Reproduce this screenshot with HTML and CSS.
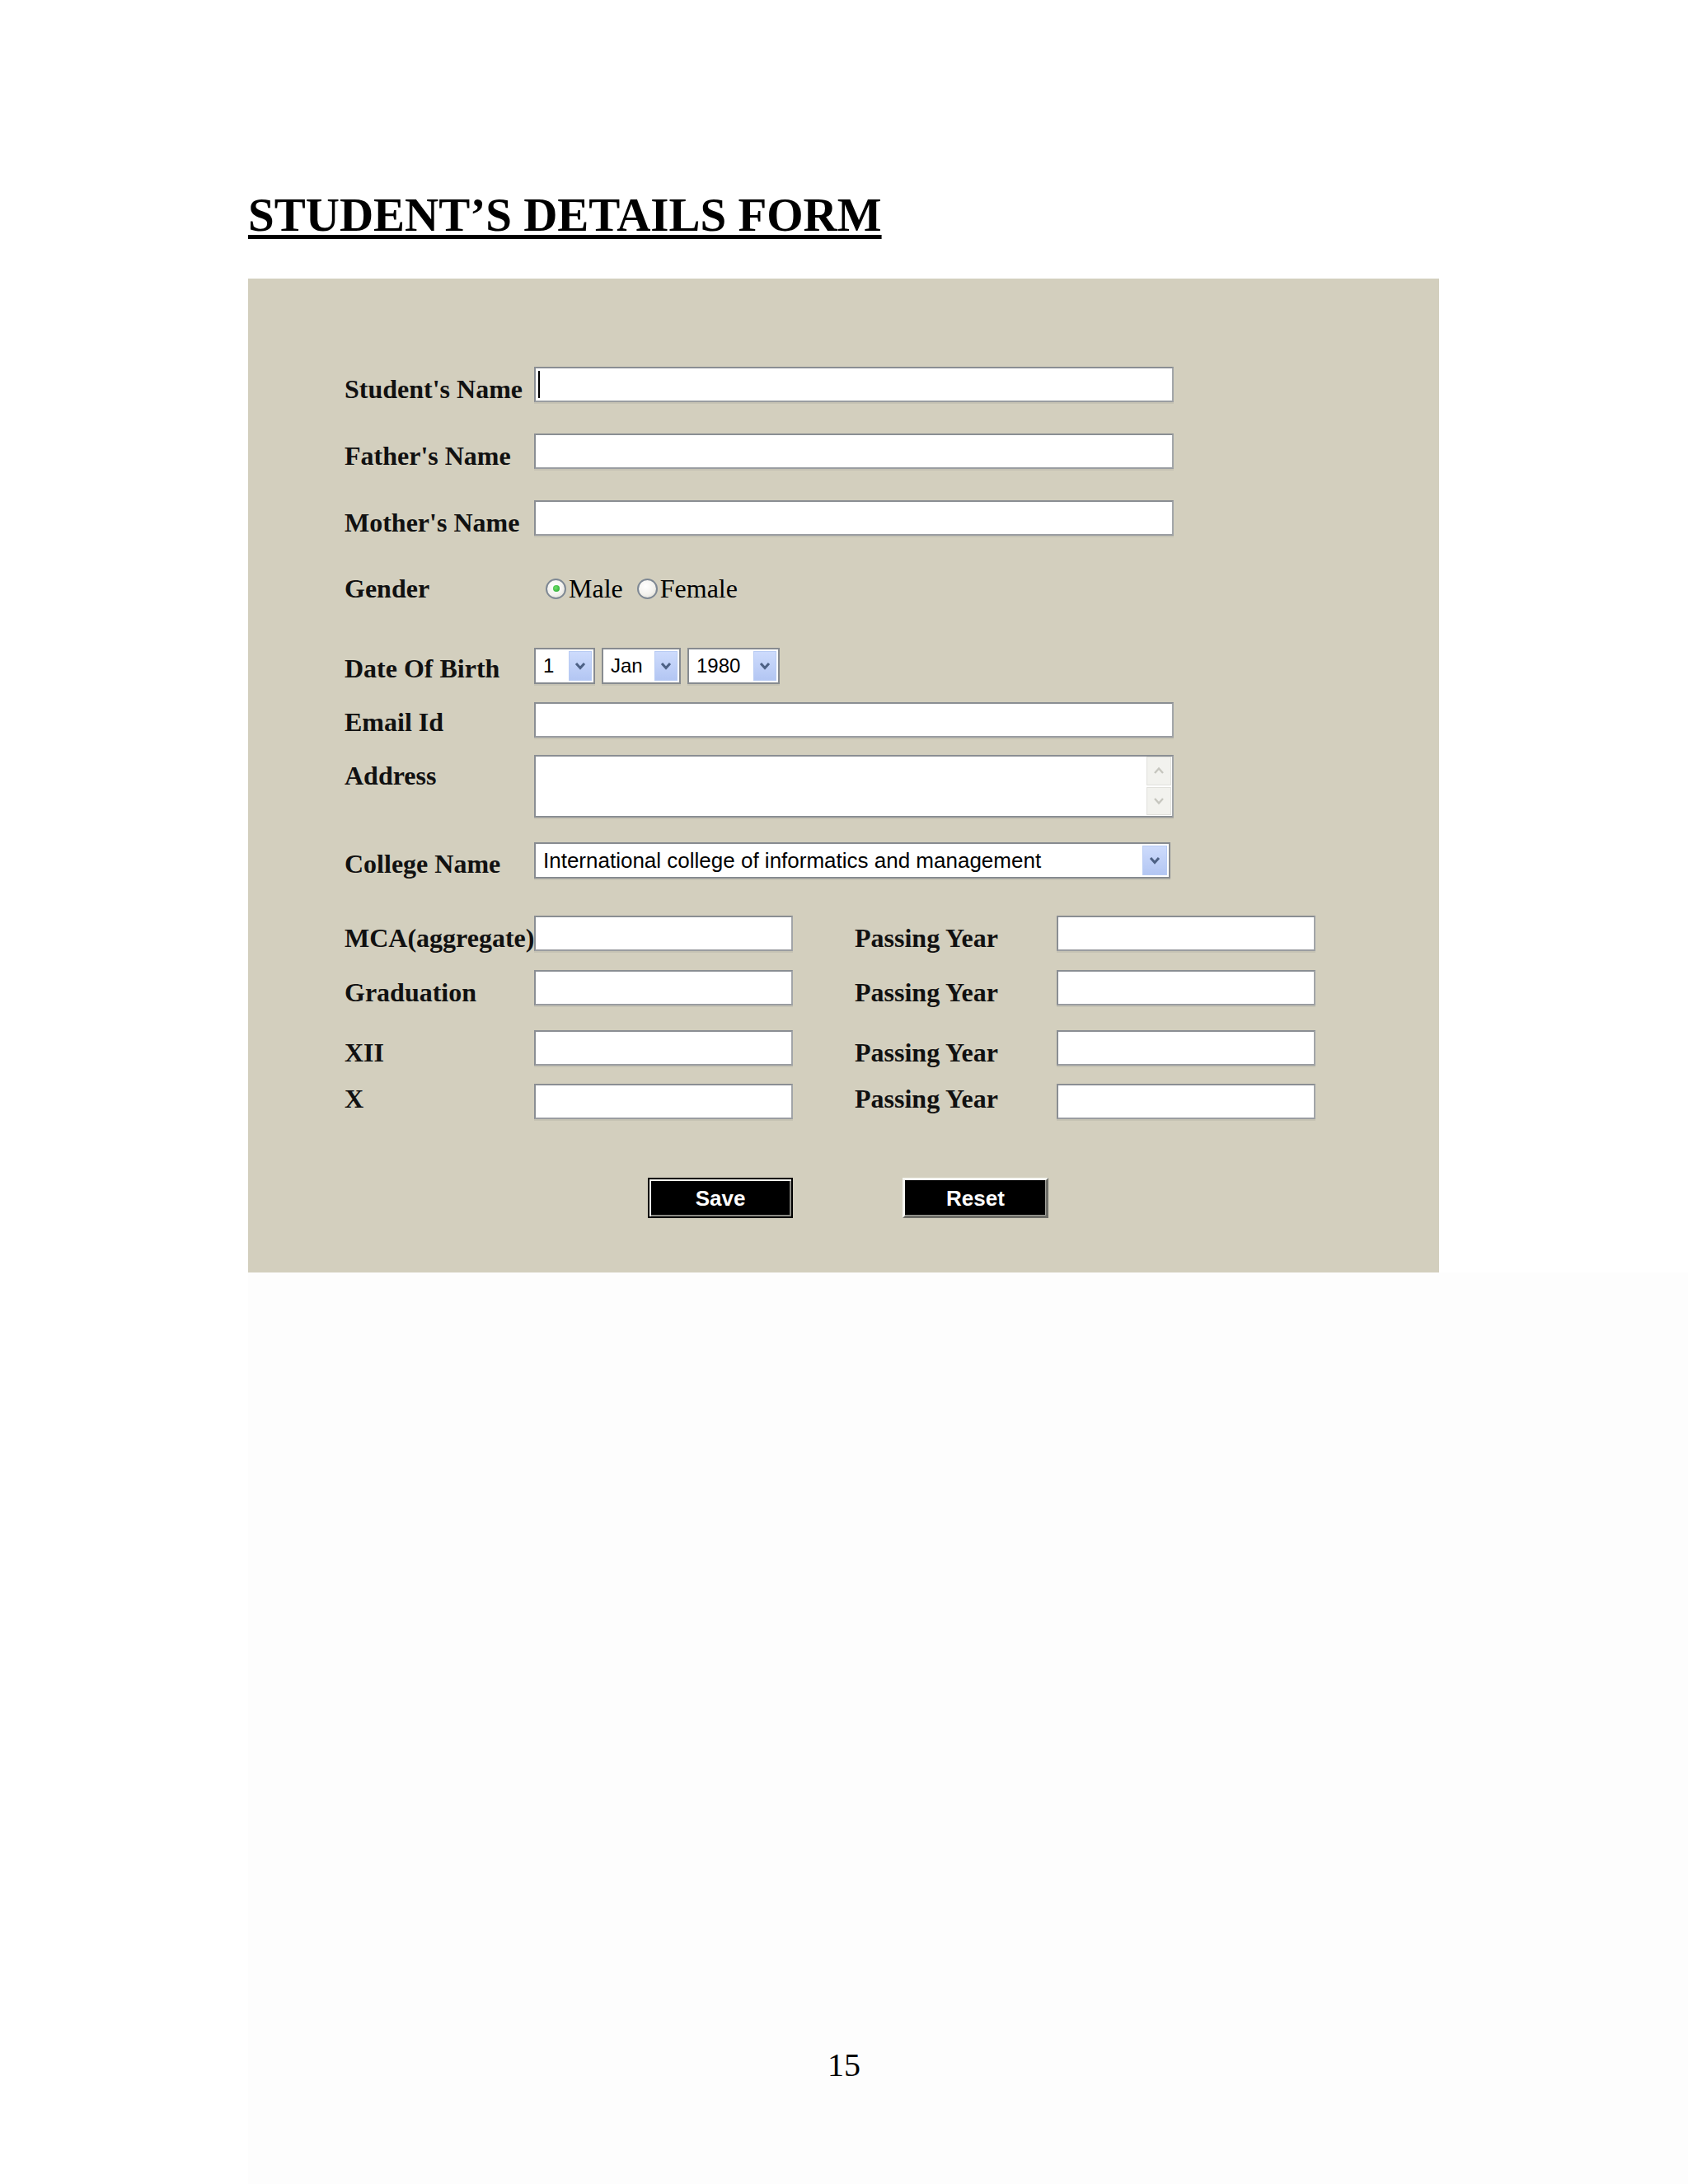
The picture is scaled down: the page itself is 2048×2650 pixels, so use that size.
FILE: index.html
```html
<!DOCTYPE html>
<html lang="en">
<head>
<meta charset="utf-8">
<title>Student's Details Form</title>
<link rel="stylesheet" href="styles.css">
</head>
<body>
<h1 class="title">STUDENT’S DETAILS FORM</h1>

<section class="panel">
  <div class="row">
    <span class="label">Student's Name</span>
    <div class="field field-wide"><span class="caret"></span></div>
  </div>
  <div class="row mt-38">
    <span class="label">Father's Name</span>
    <div class="field field-wide"></div>
  </div>
  <div class="row mt-38">
    <span class="label">Mother's Name</span>
    <div class="field field-wide"></div>
  </div>
  <div class="row mt-48">
    <span class="label">Gender</span>
    <div class="radios">
      <span class="radio checked"></span><span class="opt opt-male">Male</span>
      <span class="radio"></span><span class="opt">Female</span>
    </div>
  </div>
  <div class="row mt-56">
    <span class="label label-up3">Date Of Birth</span>
    <div class="selects">
      <div class="select sel-day"><span>1</span><span class="arrow"><svg width="14" height="10" viewBox="0 0 14 10"><path d="M2 2 L7 7.5 L12 2" fill="none" stroke="#4d6185" stroke-width="3"/></svg></span></div>
      <div class="select sel-month"><span>Jan</span><span class="arrow"><svg width="14" height="10" viewBox="0 0 14 10"><path d="M2 2 L7 7.5 L12 2" fill="none" stroke="#4d6185" stroke-width="3"/></svg></span></div>
      <div class="select sel-year"><span>1980</span><span class="arrow"><svg width="14" height="10" viewBox="0 0 14 10"><path d="M2 2 L7 7.5 L12 2" fill="none" stroke="#4d6185" stroke-width="3"/></svg></span></div>
    </div>
  </div>
  <div class="row mt-22">
    <span class="label label-up3">Email Id</span>
    <div class="field field-wide"></div>
  </div>
  <div class="row row-top mt-21">
    <span class="label label-addr">Address</span>
    <div class="textarea">
      <div class="scroll">
        <span class="scroll-btn"><svg width="14" height="10" viewBox="0 0 14 10"><path d="M2 8 L7 2.5 L12 8" fill="none" stroke="#c6c6bf" stroke-width="2.4"/></svg></span>
        <span class="scroll-btn"><svg width="14" height="10" viewBox="0 0 14 10"><path d="M2 2 L7 7.5 L12 2" fill="none" stroke="#c6c6bf" stroke-width="2.4"/></svg></span>
      </div>
    </div>
  </div>
  <div class="row mt-30">
    <span class="label label-up2">College Name</span>
    <div class="select sel-college"><span>International college of informatics and management</span><span class="arrow"><svg width="14" height="10" viewBox="0 0 14 10"><path d="M2 2 L7 7.5 L12 2" fill="none" stroke="#4d6185" stroke-width="3"/></svg></span></div>
  </div>
  <div class="row mt-45">
    <span class="label">MCA(aggregate)</span>
    <div class="field field-short"></div>
    <span class="label label-year">Passing Year</span>
    <div class="field field-short"></div>
  </div>
  <div class="row mt-23">
    <span class="label">Graduation</span>
    <div class="field field-short"></div>
    <span class="label label-year">Passing Year</span>
    <div class="field field-short"></div>
  </div>
  <div class="row mt-30">
    <span class="label">XII</span>
    <div class="field field-short"></div>
    <span class="label label-year">Passing Year</span>
    <div class="field field-short"></div>
  </div>
  <div class="row mt-22">
    <span class="label label-up9">X</span>
    <div class="field field-short"></div>
    <span class="label label-year label-up9">Passing Year</span>
    <div class="field field-short"></div>
  </div>
  <div class="buttons">
    <button class="btn btn-save" type="button">Save</button>
    <button class="btn btn-reset" type="button">Reset</button>
  </div>
</section>

<div class="tail">
  <p class="pageno">15</p>
</div>
</body>
</html>
```
FILE: styles.css
```css
* { box-sizing: border-box; }

html, body {
  margin: 0;
  padding: 0;
  background: #ffffff;
}

body {
  width: 2048px;
  min-height: 2650px;
  font-family: "Liberation Serif", "Times New Roman", serif;
  color: #000;
}

.title {
  margin: 0;
  padding: 232px 0 0 301px;
  font-size: 57px;
  line-height: 57px;
  font-weight: bold;
  text-decoration: underline;
  text-decoration-thickness: 5px;
  text-underline-offset: 5px;
}

.panel {
  margin: 49px 0 0 301px;
  width: 1445px;
  height: 1206px;
  background: #d3cfbe;
  padding: 107px 0 0 117px;
  display: flex;
  flex-direction: column;
}

.row {
  display: flex;
  align-items: flex-end;
}
.row-top { align-items: flex-start; }

.mt-21 { margin-top: 21px; }
.mt-22 { margin-top: 22px; }
.mt-23 { margin-top: 23px; }
.mt-30 { margin-top: 30px; }
.mt-38 { margin-top: 38px; }
.mt-45 { margin-top: 45px; }
.mt-48 { margin-top: 48px; }
.mt-56 { margin-top: 56px; }

.label {
  width: 230px;
  flex-shrink: 0;
  font-size: 32px;
  line-height: 32px;
  font-weight: bold;
  white-space: nowrap;
  color: #111;
}
.label-year {
  width: 245px;
  margin-left: 75px;
}
.label-up2 { margin-bottom: 2px; }
.label-up3 { margin-bottom: 3px; }
.label-up9 { margin-bottom: 9px; }
.label-addr { margin-top: 9px; }

.field {
  position: relative;
  height: 43px;
  flex-shrink: 0;
  background: #fff;
  border: 2px solid #8a8e93;
  border-right-color: #a2a5a8;
  border-bottom-color: #9a9da1;
  box-shadow: 0 2px 0 #c6c3b4;
  display: flex;
  align-items: center;
}
.field-wide { width: 776px; }
.field-short { width: 314px; }

.caret {
  display: block;
  width: 2px;
  height: 33px;
  margin-left: 3px;
  background: #000;
}

/* Gender radios */
.radios {
  height: 32px;
  display: flex;
  align-items: center;
  padding-left: 14px;
}
.radio {
  width: 25px;
  height: 25px;
  flex-shrink: 0;
  border-radius: 50%;
  border: 2px solid #7e8894;
  background: radial-gradient(circle at 40% 35%, #ffffff 0, #f3f2ee 55%, #d8d6cc 100%);
  display: flex;
  align-items: center;
  justify-content: center;
}
.radio.checked::after {
  content: "";
  width: 8px;
  height: 8px;
  border-radius: 50%;
  background: radial-gradient(circle at 40% 40%, #6ee06a 0, #21a12a 100%);
}
.opt {
  font-size: 32px;
  line-height: 32px;
  margin-left: 3px;
  white-space: nowrap;
}
.opt-male { margin-right: 17px; }

/* Selects */
.selects {
  display: flex;
  gap: 8px;
}
.select {
  height: 44px;
  flex-shrink: 0;
  background: #fff;
  border: 2px solid #878b90;
  box-shadow: 0 2px 0 #c6c3b4;
  display: flex;
  align-items: center;
  justify-content: space-between;
  padding: 0 2px 0 9px;
  font-family: "Liberation Sans", Arial, sans-serif;
  font-size: 24px;
  color: #000;
  white-space: nowrap;
}
.sel-day { width: 74px; }
.sel-month { width: 96px; }
.sel-year { width: 112px; }
.sel-college {
  width: 772px;
  font-size: 26px;
}
.arrow {
  width: 28px;
  height: 36px;
  flex-shrink: 0;
  background: linear-gradient(#cddbfc, #b3c6f3);
  border: 1px solid #b8cbf3;
  display: flex;
  align-items: center;
  justify-content: center;
}
.sel-college .arrow { width: 30px; }

/* Address textarea */
.textarea {
  width: 776px;
  height: 76px;
  flex-shrink: 0;
  background: #fff;
  border: 2px solid #8a8e93;
  border-right-color: #a2a5a8;
  box-shadow: 0 2px 0 #c6c3b4;
  display: flex;
  justify-content: flex-end;
  padding: 0 1px 1px 0;
}
.scroll {
  width: 30px;
  display: flex;
  flex-direction: column;
  gap: 2px;
}
.scroll-btn {
  flex: 1;
  background: #f2f2ee;
  border: 1px solid #e1e1dc;
  display: flex;
  align-items: center;
  justify-content: center;
}

/* Buttons */
.buttons {
  margin-top: 71px;
  padding-left: 368px;
  display: flex;
  gap: 133px;
}
.btn {
  width: 176px;
  height: 49px;
  margin: 0;
  padding: 0;
  background: #000;
  color: #fff;
  font-family: "Liberation Sans", Arial, sans-serif;
  font-weight: bold;
  font-size: 26px;
  line-height: 1;
  cursor: default;
}
.btn-save {
  border: 2px solid #000;
  box-shadow: inset 2px 2px 0 #f4f4ef, inset -2px -2px 0 #8a8a84;
}
.btn-reset {
  width: 177px;
  border-style: solid;
  border-width: 3px;
  border-color: #f6f6f1 #6d6d67 #6d6d67 #f6f6f1;
  box-shadow: inset -1px -1px 0 #a3a39c;
}

/* Page footer */
.tail {
  margin-left: 301px;
  height: 1106px;
  background: #fdfdfd;
  padding: 942px 301px 0 0;
}
.pageno {
  margin: 0;
  text-align: center;
  font-size: 40px;
  line-height: 40px;
}
```
